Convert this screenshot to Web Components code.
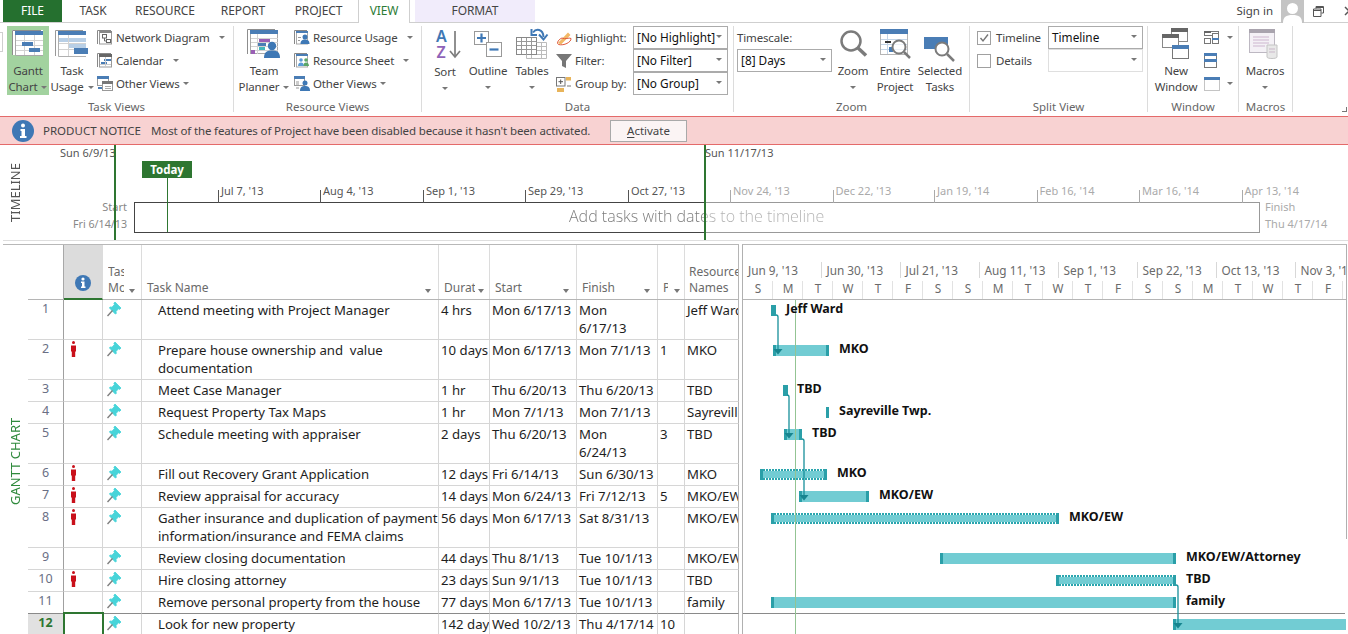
<!DOCTYPE html>
<html lang="en"><head><meta charset="utf-8"><title>Project</title>
<style>
html,body{margin:0;padding:0;background:#fff;overflow:hidden;height:634px;width:1348px}
body{font-family:"Noto Sans","Open Sans",sans-serif;font-size:12px;color:#444;position:relative}
</style></head><body>
<ribbon-tabs></ribbon-tabs>
<ribbon-bar>
  <rb-group label="Task Views" style="--w:234px;--pl:7px">
    <rb-big style="--bw:42px" active><pj-icon slot="icon" name="gantt"></pj-icon>Gantt<br>Chart<rb-caret inline></rb-caret></rb-big>
    <rb-big style="--bw:42px;margin-left:2px"><pj-icon slot="icon" name="usage"></pj-icon>Task<br>Usage<rb-caret inline></rb-caret></rb-big>
    <rb-col style="margin-left:4px">
      <rb-small gap="9"><pj-icon slot="icon" name="network"></pj-icon>Network Diagram</rb-small>
      <rb-small gap="10"><pj-icon slot="icon" name="calendar"></pj-icon>Calendar</rb-small>
      <rb-small gap="3"><pj-icon slot="icon" name="other"></pj-icon>Other Views</rb-small>
    </rb-col>
  </rb-group>
  <rb-group label="Resource Views" style="--w:188px;--pl:6px">
    <rb-big style="--bw:48px"><pj-icon slot="icon" name="team"></pj-icon>Team<br>Planner<rb-caret inline></rb-caret></rb-big>
    <rb-col style="margin-left:6px">
      <rb-small gap="9"><pj-icon slot="icon" name="resusage"></pj-icon>Resource Usage</rb-small>
      <rb-small gap="9"><pj-icon slot="icon" name="ressheet"></pj-icon>Resource Sheet</rb-small>
      <rb-small gap="3"><pj-icon slot="icon" name="resother"></pj-icon>Other Views</rb-small>
    </rb-col>
  </rb-group>
  <rb-group label="Data" style="--w:312px;--pl:7px">
    <rb-big style="--bw:32px"><pj-icon slot="icon" name="sort"></pj-icon>Sort<br><rb-caret></rb-caret></rb-big>
    <rb-big style="--bw:46px;margin-left:4px"><pj-icon slot="icon" name="outline"></pj-icon>Outline<br><rb-caret></rb-caret></rb-big>
    <rb-big style="--bw:42px"><pj-icon slot="icon" name="tables"></pj-icon>Tables<br><rb-caret></rb-caret></rb-big>
    <rb-col style="margin-left:3px;width:77px">
      <rb-small><pj-icon slot="icon" name="highlight"></pj-icon>Highlight:</rb-small>
      <rb-small><pj-icon slot="icon" name="filter"></pj-icon>Filter:</rb-small>
      <rb-small><pj-icon slot="icon" name="group"></pj-icon>Group by:</rb-small>
    </rb-col>
    <rb-col>
      <rb-combo>[No Highlight]</rb-combo>
      <rb-combo>[No Filter]</rb-combo>
      <rb-combo>[No Group]</rb-combo>
    </rb-col>
  </rb-group>
  <rb-group label="Zoom" style="--w:236px;--pl:3px">
    <rb-col>
      <rb-small plain>Timescale:</rb-small>
      <rb-combo>[8] Days</rb-combo>
    </rb-col>
    <rb-big style="--bw:42px"><pj-icon slot="icon" name="zoom"></pj-icon>Zoom<br><rb-caret></rb-caret></rb-big>
    <rb-big style="--bw:42px"><pj-icon slot="icon" name="entire"></pj-icon>Entire<br>Project</rb-big>
    <rb-big style="--bw:48px"><pj-icon slot="icon" name="selected"></pj-icon>Selected<br>Tasks</rb-big>
  </rb-group>
  <rb-group label="Split View" style="--w:178px;--pl:7px">
    <rb-col style="width:71px">
      <rb-check checked>Timeline</rb-check>
      <rb-check>Details</rb-check>
    </rb-col>
    <rb-col>
      <rb-combo>Timeline</rb-combo>
      <rb-combo disabled></rb-combo>
    </rb-col>
  </rb-group>
  <rb-group label="Window" style="--w:91px;--pl:3px">
    <rb-big style="--bw:50px"><pj-icon slot="icon" name="newwin"></pj-icon>New<br>Window</rb-big>
    <rb-col style="margin-left:3px">
      <rb-small gap="4"><pj-icon slot="icon" name="arrange"></pj-icon></rb-small>
      <rb-small><pj-icon slot="icon" name="split"></pj-icon></rb-small>
      <rb-small gap="4"><pj-icon slot="icon" name="hide"></pj-icon></rb-small>
    </rb-col>
  </rb-group>
  <rb-group label="Macros" style="--w:54px;--pl:0px">
    <rb-big style="--bw:52px"><pj-icon slot="icon" name="macros"></pj-icon>Macros<br><rb-caret></rb-caret></rb-big>
  </rb-group>
</ribbon-bar>
<notice-bar></notice-bar>
<time-line></time-line>
<gantt-view>
  <table-head slot="table"></table-head>
  <task-row slot="table"><span slot="n">1</span><span slot="name">Attend meeting with Project Manager</span><span slot="dur">4 hrs</span><span slot="start">Mon 6/17/13</span><span slot="finish">Mon<br>6/17/13</span><span slot="res">Jeff Ward</span></task-row>
  <task-row slot="table" warn><span slot="n">2</span><span slot="name">Prepare house ownership and&nbsp; value<br>documentation</span><span slot="dur">10 days</span><span slot="start">Mon 6/17/13</span><span slot="finish">Mon 7/1/13</span><span slot="pred">1</span><span slot="res">MKO</span></task-row>
  <task-row slot="table"><span slot="n">3</span><span slot="name">Meet Case Manager</span><span slot="dur">1 hr</span><span slot="start">Thu 6/20/13</span><span slot="finish">Thu 6/20/13</span><span slot="res">TBD</span></task-row>
  <task-row slot="table"><span slot="n">4</span><span slot="name">Request Property Tax Maps</span><span slot="dur">1 hr</span><span slot="start">Mon 7/1/13</span><span slot="finish">Mon 7/1/13</span><span slot="res">Sayreville Twp.</span></task-row>
  <task-row slot="table"><span slot="n">5</span><span slot="name">Schedule meeting with appraiser</span><span slot="dur">2 days</span><span slot="start">Thu 6/20/13</span><span slot="finish">Mon<br>6/24/13</span><span slot="pred">3</span><span slot="res">TBD</span></task-row>
  <task-row slot="table" warn><span slot="n">6</span><span slot="name">Fill out Recovery Grant Application</span><span slot="dur">12 days</span><span slot="start">Fri 6/14/13</span><span slot="finish">Sun 6/30/13</span><span slot="res">MKO</span></task-row>
  <task-row slot="table" warn><span slot="n">7</span><span slot="name">Review appraisal for accuracy</span><span slot="dur">14 days</span><span slot="start">Mon 6/24/13</span><span slot="finish">Fri 7/12/13</span><span slot="pred">5</span><span slot="res">MKO/EW</span></task-row>
  <task-row slot="table" warn><span slot="n">8</span><span slot="name">Gather insurance and duplication of payment<br>information/insurance and FEMA claims</span><span slot="dur">56 days</span><span slot="start">Mon 6/17/13</span><span slot="finish">Sat 8/31/13</span><span slot="res">MKO/EW</span></task-row>
  <task-row slot="table"><span slot="n">9</span><span slot="name">Review closing documentation</span><span slot="dur">44 days</span><span slot="start">Thu 8/1/13</span><span slot="finish">Tue 10/1/13</span><span slot="res">MKO/EW</span></task-row>
  <task-row slot="table" warn><span slot="n">10</span><span slot="name">Hire closing attorney</span><span slot="dur">23 days</span><span slot="start">Sun 9/1/13</span><span slot="finish">Tue 10/1/13</span><span slot="res">TBD</span></task-row>
  <task-row slot="table" dark><span slot="n">11</span><span slot="name">Remove personal property from the house</span><span slot="dur">77 days</span><span slot="start">Mon 6/17/13</span><span slot="finish">Tue 10/1/13</span><span slot="res">family</span></task-row>
  <task-row slot="table" sel><span slot="n">12</span><span slot="name">Look for new property</span><span slot="dur">142 days</span><span slot="start">Wed 10/2/13</span><span slot="finish">Thu 4/17/14</span><span slot="pred">10</span></task-row>
  <gantt-chart slot="chart">
    <gantt-bar x="771" y="305" w="5" solid label="Jeff Ward" lx="786" ly="308"></gantt-bar>
    <gantt-bar x="773" y="345" w="56" label="MKO" lx="839" ly="348"></gantt-bar>
    <gantt-bar x="783" y="385" w="5" solid label="TBD" lx="797" ly="388"></gantt-bar>
    <gantt-bar x="826" y="407" w="3" solid label="Sayreville Twp." lx="839" ly="410"></gantt-bar>
    <gantt-bar x="784" y="429" w="18" label="TBD" lx="812" ly="432"></gantt-bar>
    <gantt-bar x="760" y="469" w="67" hatch label="MKO" lx="837" ly="472"></gantt-bar>
    <gantt-bar x="799" y="491" w="70" label="MKO/EW" lx="879" ly="494"></gantt-bar>
    <gantt-bar x="771" y="513" w="288" hatch label="MKO/EW" lx="1069" ly="516"></gantt-bar>
    <gantt-bar x="940" y="553" w="236" label="MKO/EW/Attorney" lx="1186" ly="556"></gantt-bar>
    <gantt-bar x="1056" y="575" w="120" hatch label="TBD" lx="1186" ly="578"></gantt-bar>
    <gantt-bar x="771" y="597" w="405" label="family" lx="1186" ly="600"></gantt-bar>
    <gantt-bar x="1173" y="619" w="173" noend></gantt-bar>
  </gantt-chart>
</gantt-view>
<script>
const ICONS={
gantt:[32,27,`<rect width="31" height="25" y="0" fill="#fff"/><path d="M.5 25V.5H29" fill="none" stroke="#8d8d8d"/><path d="M3.5 1V25.5H31" fill="none" stroke="#a8a8a8"/><rect x="3" y="1" width="28" height="4" fill="#4a7db5"/><path d="M12.5 5V25M22.5 5V25M4 10.5H31M4 15.5H31M4 20.5H31" stroke="#d2d2d2"/><rect x="10" y="12" width="11" height="4" fill="#4a7db5"/><rect x="17" y="18" width="11" height="4" fill="#4a7db5"/>`],
usage:[34,28,`<path d="M.5 26V.5H28" fill="none" stroke="#999"/><path d="M3.5 2V26.5H31" fill="none" stroke="#b0b0b0"/><rect x="3" y="1" width="28" height="4" fill="#4a7db5"/><rect x="4" y="8" width="27" height="4" fill="#b8cfe6"/><rect x="13" y="14" width="18" height="4" fill="#b8cfe6"/><path d="M13.5 5V26M4 13.5H31M4 19.5H20" stroke="#d2d2d2"/><rect x="19" y="18" width="14" height="6" fill="#4a7db5"/>`],
team:[34,30,`<path d="M.5 25V.5H28" fill="none" stroke="#8d8d8d"/><rect x="3.5" y="1.5" width="27" height="23" fill="#fff" stroke="#a8a8a8"/><rect x="3" y="1" width="28" height="4" fill="#4a7db5"/><path d="M10.5 5V25M4 9.5H31M4 13.5H31M4 17.5H31M4 21.5H31" stroke="#d2d2d2"/><rect x="12" y="10" width="11" height="3" fill="#9a5fb5"/><rect x="11" y="14" width="8" height="3" fill="#4a7db5"/><rect x="4" y="21" width="4" height="4" fill="#9a5fb5"/><rect x="12" y="18" width="6" height="3" fill="#45b7bb"/><circle cx="25" cy="17" r="4.2" fill="#3e78b5"/><path d="M17 29c0-6 3-7.5 8-7.5s8 1.500 8 7.500z" fill="#3e78b5"/>`],
network:[15,15,`<path d="M.5 14V.5H14" fill="none" stroke="#888"/><rect x="2.500" y="1.500" width="12" height="12.500" fill="#fff" stroke="#999"/><rect x="3" y="1" width="12" height="2" fill="#888"/><rect x="5.500" y="4.500" width="4" height="3.500" fill="#fff" stroke="#666"/><rect x="9.500" y="9.500" width="4" height="3" fill="#fff" stroke="#666"/><path d="M7.500 8V11H9.500" fill="none" stroke="#666"/>`],
calendar:[15,15,`<path d="M.5 14V.5H14" fill="none" stroke="#888"/><rect x="2.500" y="2.500" width="12" height="11.500" fill="#fff" stroke="#999"/><rect x="2" y="1" width="13" height="3" fill="#666"/><rect x="7" y="6" width="7" height="2" fill="#4a7db5"/><rect x="4" y="9" width="6" height="2" fill="#4a7db5"/><path d="M8.500 4V14M3 11.500H14" stroke="#ccc"/>`],
other:[16,15,`<rect x=".5" y=".5" width="11" height="9" fill="#fff" stroke="#999"/><rect y="0" width="12" height="3" fill="#4a7db5"/><rect x="5.500" y="5.500" width="10" height="9" fill="#fff" stroke="#999"/><rect x="5" y="5" width="11" height="3" fill="#777"/><path d="M8 10.500H14M8 12.500H14" stroke="#aaa"/><rect x="1" y="11" width="4" height="2" fill="#4a7db5"/>`],
resusage:[16,15,`<path d="M.5 14V.5H13" fill="none" stroke="#888"/><rect x="2.500" y="1.500" width="11" height="12.500" fill="#fff" stroke="#aaa"/><rect x="2" y="1" width="12" height="2" fill="#4a7db5"/><circle cx="11" cy="7" r="2.500" fill="#3e78b5"/><path d="M6.500 14c0-3.500 2-4.500 4.500-4.500s4.500 1 4.500 4.500z" fill="#3e78b5"/><path d="M4 7.500H7M4 10.500H6" stroke="#999"/>`],
ressheet:[16,15,`<path d="M.5 14V.5H13" fill="none" stroke="#888"/><rect x="2.500" y="1.500" width="11" height="12.500" fill="#fff" stroke="#aaa"/><rect x="2" y="1" width="12" height="2" fill="#4a7db5"/><circle cx="7" cy="7" r="1.800" fill="#5a9bd5"/><path d="M4 13c0-2.500 1.500-3.500 3-3.500s3 1 3 3.500z" fill="#5a9bd5"/><circle cx="12" cy="7" r="1.800" fill="#5aa667"/><path d="M9.500 13c0-2.500 1-3.500 2.500-3.500s3 1 3 3.500z" fill="#5aa667"/>`],
resother:[16,15,`<rect x=".5" y=".5" width="10" height="9" fill="#fff" stroke="#999"/><rect width="11" height="3" fill="#4a7db5"/><circle cx="11" cy="7" r="2.500" fill="#3e78b5"/><path d="M6 15c0-4 2-5 5-5s5 1 5 5z" fill="#3e78b5"/><path d="M2 6H5M2 8H5M2 12H5" stroke="#999"/>`],
sort:[30,36,`<text x="6" y="16" font-family="Noto Sans" font-weight="600" font-size="16" fill="#3f78b5">A</text><text x="6.500" y="32" font-family="Noto Sans" font-weight="600" font-size="16" fill="#8f63b8">Z</text><path d="M25 5V30" stroke="#7d7d7d" stroke-width="1.700"/><path d="M20 25L25 31L30 25" fill="none" stroke="#7d7d7d" stroke-width="1.700"/>`],
outline:[28,26,`<rect x=".5" y=".5" width="14" height="13" fill="#fff" stroke="#999"/><path d="M3 7H12M7.500 2.500V11.500" stroke="#3f78b5" stroke-width="2.200"/><rect x="12.500" y="11.500" width="15" height="14" fill="#fff" stroke="#999"/><path d="M15.500 18.500H24.500" stroke="#3f78b5" stroke-width="2.200"/>`],
tables:[32,32,`<rect x=".5" y="9.500" width="20" height="17" fill="#fff" stroke="#888"/><path d="M5.500 10V26M10.500 10V26M15.500 10V26M1 13.500H20M1 17.500H20M1 21.500H20" stroke="#999"/><path d="M20.500 14.500H30.500V30.500H10.500V26.500M25.500 15V30M15.500 27V30M21 18.500H30M21 22.500H30M21 26.500H30" fill="none" stroke="#bbb"/><path d="M17 4.500C20 .5 27 .5 27.500 9" fill="none" stroke="#3f78b5" stroke-width="2"/><path d="M23 6.500L27.500 11.500L31.500 6.500M15.500 1V7H21" fill="none" stroke="#3f78b5" stroke-width="2"/>`],
highlight:[16,16,`<path d="M2 13L12 2.500L14.500 5L5 14.500z" fill="#f2b866"/><path d="M6 8C9 10 13 7 15 8.500C15.500 12 8 16 2.500 14.500C0 13 3 9 6 8z" fill="none" stroke="#e05a3a"/>`],
filter:[16,16,`<path d="M0 1H16L10 8V15L6 13V8z" fill="#777"/>`],
group:[16,16,`<rect x=".5" y="1.500" width="8.500" height="8.500" fill="#fff" stroke="#777"/><path d="M2.500 5.700H7M4.700 3.500V8" stroke="#555"/><rect x="10" y="1" width="5" height="3.500" fill="#e8b45a"/><rect x="1" y="12" width="7" height="4" fill="#e8b45a"/><path d="M11 10H15" stroke="#777"/>`],
zoom:[27,27,`<circle cx="11" cy="11" r="9.500" fill="#fff" stroke="#7b7b7b" stroke-width="2.500"/><path d="M18 18L26 25.500" stroke="#7b7b7b" stroke-width="3.500"/>`],
entire:[31,30,`<rect x=".5" y=".5" width="27" height="25" fill="#fff" stroke="#b5b5b5"/><rect width="28" height="5" fill="#4a7db5"/><path d="M7.500 5V25M1 10.500H27M1 15.500H27M1 20.500H27" stroke="#c3d4e6"/><rect x="5" y="12" width="6" height="2" fill="#333"/><rect x="9" y="18" width="4" height="5" fill="#4a7db5"/><circle cx="19" cy="18" r="6.500" fill="#fff" fill-opacity=".7" stroke="#7b7b7b" stroke-width="2"/><path d="M24 23L30 29" stroke="#7b7b7b" stroke-width="2.500"/>`],
selected:[32,34,`<g transform="translate(0 9)"><rect width="24" height="12" y="1" fill="#4a7db5"/><circle cx="18" cy="13" r="6.500" fill="#fff" stroke="#7b7b7b" stroke-width="2"/><path d="M23 18L30 25" stroke="#7b7b7b" stroke-width="2.500"/></g>`],
newwin:[28,32,`<rect x="9.500" y=".5" width="16" height="13" fill="#fff" stroke="#888"/><rect x="9" width="17" height="4" fill="#666"/><rect x=".5" y="6.500" width="16" height="13" fill="#fff" stroke="#888"/><rect y="6" width="17" height="4" fill="#666"/><rect x="10.500" y="17.500" width="16" height="13" fill="#fff" stroke="#777"/><rect x="10" y="17" width="17" height="4" fill="#4a7db5"/>`],
arrange:[16,14,`<rect x=".5" y=".5" width="14" height="4" fill="#fff" stroke="#777"/><rect y="0" width="7" height="2" fill="#666"/><rect x=".5" y="7.500" width="6" height="5" fill="#fff" stroke="#777"/><rect x="8.500" y="2.500" width="6" height="10" fill="#fff" stroke="#777"/><rect x="8" y="7" width="7" height="2" fill="#4a7db5"/>`],
split:[14,16,`<rect x=".5" y=".5" width="12" height="14" fill="#fff" stroke="#777"/><rect width="13" height="3" fill="#4a7db5"/><rect y="6" width="13" height="3" fill="#4a7db5"/>`],
hide:[16,14,`<rect x=".5" y=".5" width="15" height="13" fill="#fff" stroke="#888" stroke-dasharray="1 1"/><rect width="16" height="3" fill="#4a7db5"/>`],
macros:[32,30,`<rect x=".5" y=".5" width="25" height="23" fill="#f4f1f6" stroke="#bdb8c2"/><rect width="26" height="4" fill="#a9a4ae"/><path d="M4 8H20M4 11H20M4 14H20M4 17H16" stroke="#cdb6cf"/><path d="M18 16H28V28C28 30 18 30 18 28z" fill="#e8e8e8" stroke="#c4c4c4"/><path d="M20 20H26M20 23H26" stroke="#c9b7c9"/>`],
avatar:[23,23,`<rect width="23" height="23" fill="#c4c4c4"/><circle cx="11.500" cy="8.500" r="5.500" fill="#fff"/><path d="M2 23c0-6 3-8 9.500-8s9.500 2 9.500 8z" fill="#fff"/>`],
restore:[11,11,`<path d="M3 2.500V.5H10.500V7H8.500M.5 3H8V10.500H.5zM.5 4.500H8M3 1.500H10.500" fill="none" stroke="#555"/>`],
close:[10,10,`<path d="M1 1L9 9M9 1L1 9" stroke="#555" stroke-width="1.500"/>`],
info:[22,22,`<circle cx="11" cy="11" r="11" fill="#3f78b5"/><circle cx="11" cy="5.500" r="2" fill="#fff"/><path d="M8.500 9H13V16H14.500V18H8V16H9.500V11H8.500z" fill="#fff"/>`],
infosm:[16,16,`<circle cx="8" cy="8" r="8" fill="#3f78b5"/><circle cx="8" cy="4" r="1.600" fill="#fff"/><path d="M6 6.500H9.500V11.500H10.500V13H6V11.500H7V8H6z" fill="#fff"/>`],
pin:[15,15,`<path d="M8 0L14 6L12.600 7.400L11.500 6.700L9 9.600L9.300 11.500L8.300 12L2.500 6L3 5L5 5.200L7.400 2.600L6.900 1.300z" fill="#47d4d9" stroke="#47d4d9" stroke-width=".8"/><path d="M5.500 8.500L.5 14" stroke="#7f7f7f" stroke-width="1.400"/>`],
person:[5,16,`<circle cx="2.500" cy="1.500" r="1.500" fill="#c9101a"/><path d="M0 4.500H5V10.500H4.200V16H.8V10.500H0z" fill="#c9101a"/>`]
};
const GRID="36px 39px 39px 297px 51px 87px 81px 27px 54px";
const def=(name,css,html,extra={})=>{
  class C extends HTMLElement{
    constructor(){super();this.attachShadow({mode:'open'}).innerHTML=`<style>${css}</style>${typeof html==='function'?'':html}`;}
    connectedCallback(){if(typeof html==='function'&&!this._d){this._d=1;this.shadowRoot.innerHTML+=html(this);} extra.ready&&extra.ready.call(this);}
  }
  customElements.define(name,C);
};
def('pj-icon',`:host{display:inline-block;line-height:0}svg{display:block;overflow:visible}`,el=>{
  const [w,h,s]=ICONS[el.getAttribute('name')];return `<svg width="${w}" height="${h}" viewBox="0 0 ${w} ${h}">${s}</svg>`;});
def('rb-caret',`:host{display:inline-block;width:0;height:0;border:3px solid transparent;border-top:3.500px solid #777;border-bottom:0;vertical-align:middle}
:host([inline]){margin-left:4px}`,'');
def('ribbon-tabs',`:host{display:flex;height:22px;border-bottom:1px solid #cfcfcf;align-items:stretch;font-size:12px;color:#444;box-sizing:content-box}
.t{display:flex;align-items:center;justify-content:center;letter-spacing:-.1px;padding-bottom:2px;box-sizing:border-box}
.file{background:#25702f;color:#fff;width:59px;margin-left:3px}
.view{width:52px;margin-left:1px;border:1px solid #cfcfcf;border-width:0 1px;background:#fff;height:23px;color:#2c7c35;z-index:1;padding-bottom:3px}
.fmt{width:120px;margin-left:5px;background:#f1ecfb}
.sp{flex:1}
.r{display:flex;align-items:center;font-size:11.500px;padding-bottom:2px}`,
`<div class="t file">FILE</div><div class="t" style="width:62px">TASK</div><div class="t" style="width:82px">RESOURCE</div><div class="t" style="width:74px">REPORT</div><div class="t" style="width:77px">PROJECT</div><div class="t view">VIEW</div><div class="t fmt">FORMAT</div><div class="sp"></div>
<div class="r" style="margin-right:8px">Sign in</div><pj-icon name="avatar" style="margin-right:9px"></pj-icon><pj-icon name="restore" style="align-self:center;margin-right:20px"></pj-icon><pj-icon name="close" style="align-self:center;margin-right:-6px"></pj-icon>`);
def('ribbon-bar',`:host{display:flex;height:90px;padding-top:3px;position:relative;font-size:11.500px;letter-spacing:-.15px}
.edge{position:absolute;left:0;top:9px;width:2px;height:18px;border:1px solid #cfcfcf;border-left:0}
.launch{position:absolute;right:1px;bottom:4px;width:4px;height:4px;border:solid #777;border-width:0 1px 1px 0}`,`<div class="edge"></div><slot></slot><div class="launch"></div>`);
def('rb-group',`:host{display:block;width:var(--w);height:90px;box-sizing:border-box;position:relative}
.c{display:flex;height:69px;padding-left:var(--pl)}
.l{position:absolute;left:0;right:1px;top:73px;text-align:center;font-size:11.500px;letter-spacing:0;color:#666;line-height:16px}
.s{position:absolute;right:0;top:0;height:86px;width:1px;background:#dcdcdc}`,
el=>`<div class="c"><slot></slot></div><div class="l">${el.getAttribute('label')}</div><div class="s"></div>`);
def('rb-big',`:host{display:flex;flex-direction:column;width:var(--bw);height:69px;align-items:center;text-align:center;line-height:16px;flex:none;white-space:nowrap}
:host([active]){background:#a2d29f}
.i{height:38px;display:flex;align-items:center;justify-content:center;width:100%;margin-bottom:2px}`,
`<div class="i"><slot name="icon"></slot></div><div><slot></slot></div>`);
def('rb-col',`:host{display:flex;flex-direction:column;flex:none}`,`<slot></slot>`);
def('rb-small',`:host{display:flex;align-items:center;height:23px;white-space:nowrap;flex:none}
.i{width:15px;margin-right:4px;display:flex;align-items:center}
:host([plain]) .i{display:none}`,
el=>`<div class="i"><slot name="icon"></slot></div><slot></slot>${el.hasAttribute('gap')?`<rb-caret style="margin-left:${el.getAttribute('gap')}px"></rb-caret>`:''}`);
def('rb-combo',`:host{display:flex;align-items:center;width:95px;height:23px;box-sizing:border-box;border:1px solid #ababab;margin-bottom:0;padding:0 5px 2px 3px;color:#111;background:#fff;justify-content:space-between;white-space:nowrap;font-size:11.800px;letter-spacing:0}
:host([disabled]){border-color:#dfdfdf}`,`<span><slot></slot></span><rb-caret></rb-caret>`);
def('rb-check',`:host{display:flex;align-items:center;height:23px;white-space:nowrap}
.b{width:12px;height:12px;border:1px solid #a0a0a0;margin-right:5px;box-sizing:content-box;line-height:0}
svg{display:none}:host([checked]) svg{display:block}`,
`<div class="b"><svg width="12" height="12"><path d="M2.500 6L5 9L10 2.500" fill="none" stroke="#777" stroke-width="1.400"/></svg></div><slot></slot>`);
def('notice-bar',`:host{display:flex;align-items:center;height:27px;border-top:1px solid #e46a6a;border-bottom:1px solid #e46a6a;background:#f8d2d2;color:#444;font-size:11.500px;padding-left:12px}
.n{margin-left:9px;width:108px;white-space:nowrap}.m{width:459px;white-space:nowrap;letter-spacing:-.13px}
.btn{width:75px;height:20px;border:1px solid #a9a9a9;background:#fbf4f4;display:flex;align-items:center;justify-content:center;color:#444}
u{text-underline-offset:2px}`,
`<pj-icon name="info"></pj-icon><span class="n">PRODUCT NOTICE</span><span class="m">Most of the features of Project have been disabled because it hasn't been activated.</span><div class="btn"><span><u>A</u>ctivate</span></div>`);
def('time-line',`:host{display:block;position:relative;height:95px;border-bottom:1px solid #dedede;margin-left:3px;font-size:11px;color:#555}
/* the timeline is a free canvas: markers sit at their date */
.a{position:absolute;white-space:nowrap}
.v{position:absolute;left:3px;top:17px;height:60px;display:flex;align-items:center;writing-mode:vertical-rl;transform:rotate(180deg);font-size:13px;color:#555;line-height:18px}
.box{left:131px;top:57px;width:1124px;height:29px;border:1px solid #999}
.boxd{left:131px;top:57px;width:571px;height:29px;border:1px solid #444;border-right:0}
.g{width:2px;top:0;bottom:0;background:#2e7631}
.fl{left:139px;top:16px;width:50px;height:17px;background:#2e7631;color:#fff;font-weight:700;font-size:11.500px;text-align:center;line-height:17px}
.tl{left:164px;top:33px;width:1px;height:54px;background:#2e7631}
.tk{top:45px;width:1px;height:13px}
.lb{top:38px;line-height:16px}
.add{font-size:16px;font-weight:300;top:59px;left:566px;line-height:24px;font-family:"Open Sans","Noto Sans",sans-serif;background:linear-gradient(to right,#777 136px,#b0b0b0 136px);-webkit-background-clip:text;background-clip:text;color:transparent}`,
()=>{
 const t=[[215,"Jul 7, '13"],[317,"Aug 4, '13"],[420,"Sep 1, '13"],[522,"Sep 29, '13"],[625,"Oct 27, '13"],[727,"Nov 24, '13"],[829.500,"Dec 22, '13"],[931,"Jan 19, '14"],[1033.500,"Feb 16, '14"],[1136,"Mar 16, '14"],[1238.500,"Apr 13, '14"]];
 return `<div class="v">TIMELINE</div><div class="a box"></div><div class="a boxd"></div>`+
 t.map(([x,s],i)=>{const c=i<5?'#555':'#aaa';return `<div class="a tk" style="left:${x}px;background:${c}"></div><div class="a lb" style="left:${x+3}px;color:${c}">${s}</div>`}).join('')+
 `<div class="a" style="left:57px;top:0;line-height:16px">Sun 6/9/13</div><div class="a" style="left:702px;top:0;line-height:16px">Sun 11/17/13</div>
 <div class="a" style="right:1221px;top:54px;line-height:16px;color:#888">Start</div><div class="a" style="right:1221px;top:71px;line-height:16px;color:#888;font-size:10.700px">Fri 6/14/13</div>
 <div class="a" style="left:1262px;top:54px;line-height:16px;color:#aaa">Finish</div><div class="a" style="left:1262px;top:71px;line-height:16px;color:#aaa">Thu 4/17/14</div>
 <div class="a add">Add tasks with dates to the timeline</div>
 <div class="a g" style="left:111px"></div><div class="a g" style="left:701px"></div><div class="a tl"></div><div class="a fl">Today</div>`;
});
def('gantt-view',`:host{display:flex;position:relative;height:390px;margin-top:3px;overflow:hidden}
.side{width:28px;flex:none;position:relative;display:flex;justify-content:center;padding:173px 0 0 2px;box-sizing:border-box;height:390px}
.side span{writing-mode:vertical-rl;transform:rotate(180deg);color:#2f8a3c;font-size:13px;height:88px;text-align:center;white-space:nowrap;line-height:18px}
.t{width:711px;flex:none;display:flex;flex-direction:column;border-top:1px solid #b8b8b8;box-sizing:border-box;margin-left:0}
.tt{margin-left:-25px;height:1px;background:#b8b8b8;width:736px;position:absolute;top:0;left:28px}
.c{flex:none;width:605px;margin-left:3px;height:390px}`,
`<div class="side"><span>GANTT CHART</span></div><div class="tt"></div><div class="t"><slot name="table"></slot></div><div class="c"><slot name="chart"></slot></div>`);
def('table-head',`:host{display:grid;grid-template-columns:${GRID};height:55px;border-bottom:1px solid #b5b5b5;box-sizing:border-box;font-size:12px;color:#6a6a6a;flex:none}
.h{border-right:1px solid #dcdcdc;display:flex;align-items:flex-end;line-height:16px;padding:0 0 3px 5px;box-sizing:border-box;position:relative;overflow:hidden;white-space:nowrap}
.h span{display:block}
.h i{position:absolute;right:7px;bottom:6px;width:0;height:0;border:3.500px solid transparent;border-top:4px solid #777;border-bottom:0}
.inf{background:#dcdcdc;border-bottom:2px solid #2e7631;justify-content:center;align-items:center;padding:22px 0 0;margin-bottom:-1px;border-right:1px solid #dcdcdc;height:55px}
.id{border-right:1px solid #a8a8a8}`,
`<div class="h id"></div><div class="h inf"><pj-icon name="infosm"></pj-icon></div>
<div class="h"><span style="width:16px;overflow:hidden">Task<br>Mode</span><i style="right:6px"></i></div>
<div class="h"><span>Task Name</span><i></i></div>
<div class="h"><span style="width:31px;overflow:hidden">Duration</span><i style="right:5px"></i></div>
<div class="h"><span>Start</span><i></i></div>
<div class="h"><span>Finish</span><i></i></div>
<div class="h"><span style="width:5px;overflow:hidden">Pre</span><i style="right:4px"></i></div>
<div class="h" style="padding-left:4px;border-right:1px solid #b5b5b5"><span style="width:49px;overflow:hidden">Resource<br>Names</span></div>`);
def('task-row',`:host{display:grid;grid-template-columns:${GRID};flex:none;font-size:13.200px;color:#1e1e1e;line-height:18px;--line:#d6d6d6}
:host([dark]){--line:#8a8a8a}
.c{border-right:1px solid #d6d6d6;border-bottom:1px solid var(--line);padding:1px 0 2px 2px;white-space:nowrap;overflow:hidden;box-sizing:border-box;position:relative}
.n{text-align:center;color:#6a6f85;border-right-color:#a0a0a0;padding:0 0 3px 0;font-size:12.500px}
:host([sel]) .n{background:#e1e1e1;color:#2e7631;font-weight:700}
.ind{padding:1px 0 0 7px}
.person{display:none}:host([warn]) .person{display:block}
:host([sel]) .ind{outline:2px solid #2e7631;outline-offset:-1px;margin-top:-1px;border-color:transparent}
.mode{padding:2px 0 0 4px}
.name{padding-left:16px;letter-spacing:-.03px}
.res{padding-left:2px;border-right-color:#b5b5b5}`,
`<div class="c n"><slot name="n"></slot></div><div class="c ind"><pj-icon class="person" name="person"></pj-icon></div><div class="c mode"><pj-icon name="pin"></pj-icon></div><div class="c name"><slot name="name"></slot></div><div class="c"><slot name="dur"></slot></div><div class="c"><slot name="start"></slot></div><div class="c"><slot name="finish"></slot></div><div class="c"><slot name="pred"></slot></div><div class="c res"><slot name="res"></slot></div>`);
def('gantt-chart',`:host{display:block;position:relative;height:390px;width:605px;border-left:1px solid #b0b0b0;border-top:1px solid #b8b8b8;box-sizing:border-box;overflow:hidden;font-size:11.800px;color:#6a6a6a}
.top,.days{display:flex;white-space:nowrap}
.top{height:33px;align-items:flex-end}
.top div{width:79px;height:16px;line-height:17px;padding-left:5px;box-sizing:border-box;border-right:1px solid #d8d8d8;flex:none;overflow:hidden}
.top div:first-child{width:78.500px}
.days{height:21px;border-bottom:1px solid #b5b5b5;box-sizing:content-box;line-height:21px}
.days div{width:30px;flex:none;text-align:center;position:relative}
.days div::after{content:"";position:absolute;right:0;top:3px;height:18px;width:1px;background:#e2e2e2}
.right{position:absolute;right:0;top:0;width:1px;height:294px;background:#b0b0b0}
.hl{position:absolute;left:0;right:2px;top:368px;height:1px;background:#8a8a8a}
.now{position:absolute;left:52px;top:55px;bottom:0;width:1px;background:#93c493;z-index:2}
svg{position:absolute;left:0;top:0;z-index:3}`,
()=>{
 const top=["Jun 9, '13","Jun 30, '13","Jul 21, '13","Aug 11, '13","Sep 1, '13","Sep 22, '13","Oct 13, '13","Nov 3, '13"];
 const d="SMTWTFS".split('');const days=[];for(let i=0;i<20;i++)days.push(d[i%7]);
 const ox=743,oy=245;
 const con=(p,ax,ay)=>`<path d="${p}" fill="none" stroke="#17909a" stroke-width="1.300"/><path d="M${ax-4.500-ox} ${ay-oy}H${ax+4.500-ox}L${ax-ox} ${ay+5.500-oy}z" fill="#17858f"/>`;
 const c=(x0,y0,x1,ay)=>con(`M${x0-ox} ${y0-oy}H${x1-2-ox}Q${x1-ox} ${y0-oy} ${x1-ox} ${y0+2-oy}V${ay-oy}`,x1,ay);
 return `<div class="top">${top.map(t=>`<div>${t}</div>`).join('')}</div><div class="days">${days.map(t=>`<div>${t}</div>`).join('')}</div>
 <div class="right"></div><div class="hl"></div><div class="now"></div><slot></slot>
 <svg width="604" height="389">${c(776,315,778,349)}${c(788,395,789,433)}${c(802,439,804,495)}${c(1176,585,1178,623)}</svg>`;
});
def('gantt-bar',`:host{display:contents}
.b{position:absolute;height:11px;background:#72ccd3;box-sizing:border-box;border-left:3px solid #2a9fa8;border-right:3px solid #2a9fa8;z-index:1}
.solid{background:#2a9fa8;border:0}
.noend{border-right:0}
.hatch::before,.hatch::after{content:"";position:absolute;left:0;right:0;height:2px;background:repeating-linear-gradient(to right,#2aa5ae 0 2px,#fff 2px 3px)}
.hatch::before{top:0}.hatch::after{bottom:0}
.l{position:absolute;font-weight:700;font-size:12.500px;line-height:16px;color:#111;white-space:nowrap;transform:translateY(-7px);z-index:4}`,
el=>{
 const g=n=>el.getAttribute(n),ox=743,oy=245;
 const cls=['b',el.hasAttribute('solid')?'solid':'',el.hasAttribute('hatch')?'hatch':'',el.hasAttribute('noend')?'noend':''].join(' ');
 return `<div class="${cls}" style="left:${g('x')-ox}px;top:${g('y')-oy}px;width:${g('w')}px"></div>`+(g('label')?`<div class="l" style="left:${g('lx')-ox}px;top:${g('ly')-oy}px">${g('label')}</div>`:'');
});
</script>
</body></html>
